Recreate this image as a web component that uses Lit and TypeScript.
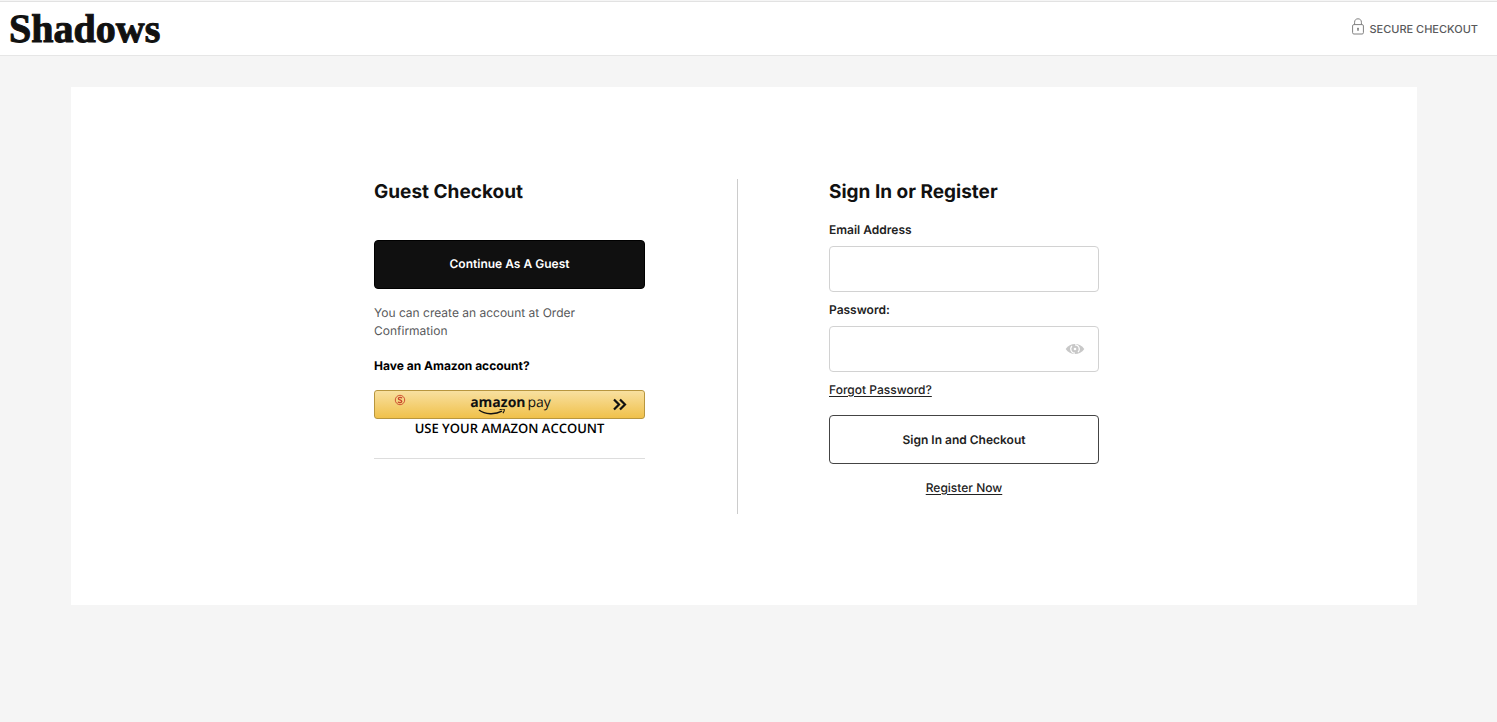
import { LitElement, html, css } from "lit";
import { customElement, state } from "lit/decorators.js";

@customElement("guest-checkout")
class GuestCheckout extends LitElement {
  static styles = css`
    :host { display: block; }
    .title { margin: 0 0 35px; font-size: 19px; line-height: 26px; font-weight: 700; color: #111; }
    .guest {
      display: block; width: 100%; height: 49px; padding: 0 0 2px; border: 1px solid #000; border-radius: 4px;
      background: #101010; color: #fff; font: 600 12px/18px Inter, sans-serif; cursor: pointer;
      text-rendering: inherit;
    }
    .note { margin: 15px 0 17px; padding-right: 48px; color: #58595b; }
    .amazon-title { margin: 0 0 15px; font-size: 12px; line-height: 18px; font-weight: 700; color: #000; }
    .amazon {
      display: grid; grid-template-columns: 1fr auto 1fr; align-items: center; width: 100%; height: 29px;
      padding: 0 17px 0 19px; border: 1px solid #b8963e; border-radius: 3px; text-rendering: inherit;
      background: linear-gradient(#f8e0a0, #f0c14b); color: #111; cursor: pointer;
    }
    .badge { width: 12px; height: 12px; margin-bottom: 10px; }
    .brand { display: grid; font: 700 14px/16px "Open Sans", sans-serif; text-align: left; }
    .pay { font-weight: 400; margin-left: 2px; }
    .words, .smile { grid-area: 1 / 1; }
    .words { padding-bottom: 4px; }
    .smile { align-self: end; width: 28px; height: 6px; margin-left: 8px; }
    .arrows { justify-self: end; width: 15px; height: 13px; }
    .caption {
      margin: 0 0 21px; text-align: center; color: #000;
      font: 600 13px/18px "Open Sans", sans-serif;
    }
    .rule { height: 1px; margin: 0; border: 0; background: #ddd; }
  `;

  render() {
    return html`
      <h2 class="title">Guest Checkout</h2>
      <button class="guest" type="button">Continue As A Guest</button>
      <p class="note">You can create an account at Order Confirmation</p>
      <h3 class="amazon-title">Have an Amazon account?</h3>
      <button class="amazon" type="button" aria-label="amazon pay">
        <svg class="badge" viewBox="0 0 12 12" fill="none" stroke="#c8452b" aria-hidden="true">
          <circle cx="6" cy="6" r="4.7" stroke-width=".9" />
          <path d="M8 4.2C7.5 3.2 4.4 3 4.3 4.7c0 1.5 3.5 1 3.5 2.7C7.7 9 4.5 8.8 4 7.7" stroke-width="1.3" />
        </svg>
        <span class="brand">
          <span class="words">amazon<span class="pay">pay</span></span>
          <svg class="smile" viewBox="0 0 28 6" fill="none" stroke="#111" aria-hidden="true">
            <path d="M1 1C7 5.600 17 5.900 24 2.200" stroke-width="1.5" />
            <path d="M21.500 .8c2-.7 4.300-.8 4.700-.3.3.6-.2 2.200-1.300 3.600" stroke-width="1.1" />
          </svg>
        </span>
        <svg class="arrows" viewBox="0 0 15 13" fill="none" stroke="#111" stroke-width="2.2" aria-hidden="true">
          <path d="M2 1.500l5 5-5 5M8 1.500l5 5-5 5" />
        </svg>
      </button>
      <p class="caption">USE YOUR AMAZON ACCOUNT</p>
      <hr class="rule" />
    `;
  }
}

@customElement("sign-in-form")
class SignInForm extends LitElement {
  @state() private revealed = false;

  static styles = css`
    :host { display: block; }
    .title { margin: 0 0 16px; font-size: 19px; line-height: 26px; font-weight: 700; color: #111; }
    .form { display: flex; flex-direction: column; }
    .label { margin-bottom: 7px; font-weight: 600; color: #222; }
    .field {
      display: flex; align-items: center; height: 46px; margin-bottom: 9px; box-sizing: border-box;
      border: 1px solid #d2d2d2; border-radius: 4px; background: #fff;
    }
    .field:focus-within { border-color: #777; }
    .input {
      flex: 1; min-width: 0; height: 100%; box-sizing: border-box; padding: 0 12px; border: 0; outline: 0;
      background: none; font: 400 14px/18px Inter, sans-serif; color: #111;
    }
    .toggle { display: flex; padding: 0; margin-right: 13px; border: 0; background: none; cursor: pointer; }
    .eye { width: 20px; height: 14px; }
    .link { color: #222; text-decoration: underline; text-underline-offset: 2px; }
    .forgot { align-self: flex-start; margin-bottom: 16px; font-weight: 500; }
    .submit {
      height: 49px; margin-bottom: 15px; padding: 0; border: 1px solid #444; border-radius: 4px;
      background: #fff; color: #222; font: 600 12px/18px Inter, sans-serif; cursor: pointer;
      text-rendering: inherit;
    }
    .register { align-self: center; font-weight: 500; }
  `;

  render() {
    return html`
      <h2 class="title">Sign In or Register</h2>
      <form class="form" @submit=${(e: Event) => e.preventDefault()}>
        <label class="label" for="email">Email Address</label>
        <div class="field"><input class="input" id="email" type="email" /></div>
        <label class="label" for="password">Password:</label>
        <div class="field">
          <input class="input" id="password" type=${this.revealed ? "text" : "password"} />
          <button class="toggle" type="button" aria-label="Show password"
            @click=${() => (this.revealed = !this.revealed)}>
            <svg class="eye" viewBox="0 0 20 14" aria-hidden="true">
              <path d="M.7 7C5 .3 15 .3 19.300 7 15 13.700 5 13.700 .7 7z" fill="#c8c8c8" />
              <path d="M10 11.200A4.200 4.200 0 0 1 7 4M10 2.800A4.200 4.200 0 0 1 13 10" fill="none" stroke="#fff" stroke-width="1.200" />
              <circle cx="10" cy="7" r="1.300" fill="#fff" />
            </svg>
          </button>
        </div>
        <a class="link forgot" href="#forgot">Forgot Password?</a>
        <button class="submit" type="submit">Sign In and Checkout</button>
        <a class="link register" href="#register">Register Now</a>
      </form>
    `;
  }
}

@customElement("app-root")
class AppRoot extends LitElement {
  static styles = css`
    :host {
      display: block; box-sizing: border-box; min-height: 100vh; padding-top: 1px; background: #f5f5f5;
      font: 400 12px/18px Inter, sans-serif; color: #111; text-rendering: geometricPrecision;
    }
    .header {
      display: flex; align-items: center; justify-content: space-between; height: 55px; box-sizing: border-box;
      padding: 0 19px 0 9px; background: #fff; border-top: 1px solid #e2e2e2; border-bottom: 1px solid #e6e6e6;
    }
    .logo {
      font: 700 40px/48px "Liberation Serif", serif; color: #111; text-decoration: none;
      -webkit-text-stroke: 1px #111;
    }
    .secure { display: flex; align-items: center; gap: 5px; font-size: 11px; font-weight: 500; color: #58595b; }
    .lock { width: 12px; height: 17px; margin-bottom: 4px; }
    .card {
      display: flex; justify-content: center; margin: 31px 80px 0 71px; padding: 92px 15px 91px 0; background: #fff;
    }
    .columns { display: grid; grid-template-columns: 271px auto; column-gap: 92px; }
    .sign-in { width: 270px; padding: 0 0 17px 91px; border-left: 1px solid #ccc; }
  `;

  render() {
    return html`
      <header class="header">
        <a class="logo" href="#home">Shadows</a>
        <div class="secure">
          <svg class="lock" viewBox="0 0 12 17" fill="none" stroke="#808080" aria-hidden="true">
            <rect x=".6" y="6.600" width="10.800" height="9.400" rx="1.300" />
            <path d="M2.600 6.500V4.200C2.600 2 4 .8 6 .8s3.400 1.200 3.400 3.400v2.300" />
            <path d="M6 9.700v3.300M5 10.800h2" stroke-width="1.200" />
          </svg>
          <span>SECURE CHECKOUT</span>
        </div>
      </header>
      <main class="card">
        <div class="columns">
          <guest-checkout></guest-checkout>
          <sign-in-form class="sign-in"></sign-in-form>
        </div>
      </main>
    `;
  }
}
